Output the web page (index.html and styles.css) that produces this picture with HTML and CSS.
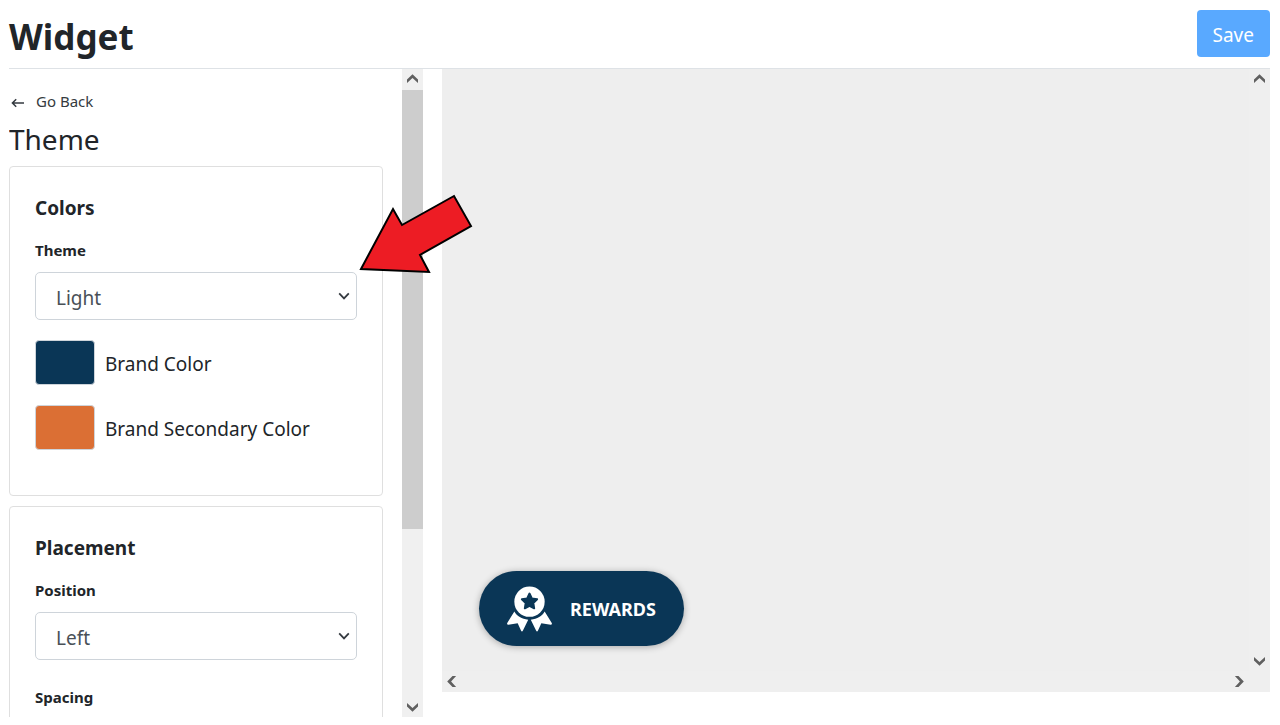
FILE: index.html
```html
<!DOCTYPE html>
<html lang="en">
<head>
<meta charset="utf-8">
<meta name="viewport" content="width=device-width, initial-scale=1">
<title>Widget</title>
<link rel="stylesheet" href="styles.css">
</head>
<body>
<div class="page">
  <header class="header">
    <h1 class="title">Widget</h1>
    <button class="save" type="button">Save</button>
  </header>
  <main class="main">
    <section class="sidebar">
      <div class="settings">
        <a class="back" href="#">
          <svg class="back-icon" viewBox="0 0 14 10" aria-hidden="true"><path d="M13 5H1.5M5.2 1.2 1.4 5l3.8 3.8"/></svg>
          Go Back
        </a>
        <h2 class="subtitle">Theme</h2>
        <div class="card">
          <h3 class="card-title">Colors</h3>
          <label class="label" for="theme">Theme</label>
          <div class="select-wrap">
            <select class="select" id="theme"><option>Light</option><option>Dark</option></select>
            <svg class="chevron" viewBox="0 0 12 8" aria-hidden="true"><path d="M1.2 1.4 6 6.4l4.8-5"/></svg>
          </div>
          <div class="color-row">
            <button class="swatch swatch-primary" id="brand" type="button" aria-labelledby="brand-label"></button>
            <label class="color-label" id="brand-label" for="brand">Brand Color</label>
          </div>
          <div class="color-row">
            <button class="swatch swatch-secondary" id="brand2" type="button" aria-labelledby="brand2-label"></button>
            <label class="color-label" id="brand2-label" for="brand2">Brand Secondary Color</label>
          </div>
        </div>
        <div class="card">
          <h3 class="card-title">Placement</h3>
          <label class="label" for="position">Position</label>
          <div class="select-wrap">
            <select class="select" id="position"><option>Left</option><option>Right</option></select>
            <svg class="chevron" viewBox="0 0 12 8" aria-hidden="true"><path d="M1.2 1.4 6 6.4l4.8-5"/></svg>
          </div>
          <p class="label label-spaced">Spacing</p>
        </div>
      </div>
      <div class="scrollbar">
        <svg class="arrow" viewBox="0 0 21 21" aria-hidden="true"><path d="M5 10.5v3.6l5.5-5 5.5 5v-3.6l-5.5-5.3z"/></svg>
        <div class="track"><div class="thumb"></div></div>
        <svg class="arrow" viewBox="0 0 21 21" aria-hidden="true"><path d="M5 10.500V6.900l5.500 5 5.500-5v3.600l-5.500 5.300z"/></svg>
      </div>
    </section>
    <section class="preview">
      <div class="canvas">
        <button class="rewards" type="button">
          <svg class="badge" viewBox="0 0 46 46" aria-hidden="true">
            <path d="M23 0a15.500 15.500 0 1 1 0 31a15.500 15.500 0 0 1 0-31z"/>
            <path class="badge-star" d="M23 7.200l2.400 5 5.400.8-3.900 3.900.9 5.400-4.800-2.500-4.800 2.500.9-5.400-3.900-3.900 5.400-.8z"/>
            <path d="M7.500 25.500c2.800 4.800 7.400 7.700 14.200 8.400l-5.400 11q-1 2-2 0l-3.400-7.300-9.500 1.400q-2 0-1-2zM38.500 25.500c-2.800 4.800-7.400 7.700-14.200 8.400l5.400 11q1 2 2 0l3.400-7.300 9.500 1.400q2 0 1-2z"/>
          </svg>
          <span>REWARDS</span>
        </button>
      </div>
      <div class="scrollbar scrollbar-idle">
        <svg class="arrow" viewBox="0 0 21 21" aria-hidden="true"><path d="M5 10.500v3.600l5.500-5 5.500 5v-3.600l-5.500-5.300z"/></svg>
        <svg class="arrow" viewBox="0 0 21 21" aria-hidden="true"><path d="M5 10.500V6.900l5.500 5 5.500-5v3.600l-5.500 5.300z"/></svg>
      </div>
      <div class="scrollbar scrollbar-x">
        <svg class="arrow" viewBox="0 0 21 21" aria-hidden="true"><path d="M10.500 5h3.600l-5 5.500 5 5.500h-3.600l-5.300-5.500z"/></svg>
        <svg class="arrow" viewBox="0 0 21 21" aria-hidden="true"><path d="M10.500 5H6.900l5 5.500-5 5.500h3.600l5.300-5.500z"/></svg>
      </div>
    </section>
  </main>
  <svg class="pointer" viewBox="0 0 114 80" aria-hidden="true"><path d="M2 75 34 15l9 16L95 2l17 30-51 29 9 17z"/></svg>
</div>
</body>
</html>
```
FILE: styles.css
```css
* {
  box-sizing: border-box;
}

body {
  margin: 0;
  background: #fff;
  color: #212529;
  font-family: "Segoe UI", "Noto Sans", sans-serif;
  font-size: 19px;
  line-height: 24px;
}

h1, h2, h3, p {
  margin: 0;
}

.page {
  position: relative;
  display: flex;
  flex-direction: column;
  height: 100vh;
  padding: 0 10px 8px 9px;
  overflow: hidden;
}

.header {
  display: flex;
  align-items: flex-start;
  justify-content: space-between;
  padding: 10px 0 11px;
  border-bottom: 1px solid #dee2e6;
}

.title {
  font-size: 35px;
  font-weight: 700;
  line-height: 47px;
  padding-top: 3px;
  height: 47px;
}

.save {
  padding: 12px 16px 8px;
  border: 0;
  border-radius: 4px;
  background: #59a9ff;
  color: #fff;
  font: inherit;
  line-height: 27px;
}

.main {
  flex: 1;
  display: flex;
  gap: 19px;
  min-height: 0;
}

.sidebar {
  display: flex;
  justify-content: space-between;
  flex: 0 0 414px;
  overflow: hidden;
}

.settings {
  flex: 1;
  margin-right: 19px;
  padding-top: 20px;
  overflow: hidden;
}

.back {
  display: flex;
  align-items: center;
  gap: 11px;
  padding-left: 2px;
  color: #343a40;
  font-size: 15px;
  text-decoration: none;
}

.back-icon {
  width: 14px;
  height: 10px;
  margin-top: 3px;
}

.back-icon,
.chevron {
  fill: none;
  stroke: #343a40;
  stroke-width: 1.5;
}

.subtitle {
  margin: 8px 0 9px;
  font-size: 28px;
  font-weight: 400;
  line-height: 36px;
}

.card {
  margin-bottom: 10px;
  padding: 29px 25px 45px;
  border: 1px solid #dfdfdf;
  border-radius: 4px;
}

.card-title {
  margin-bottom: 20px;
  font-size: 19px;
  font-weight: 700;
}

.label {
  display: block;
  margin-bottom: 12px;
  font-size: 15px;
  font-weight: 700;
  line-height: 20px;
}

.label-spaced {
  margin-top: 27px;
}

.select-wrap {
  position: relative;
}

.select {
  display: block;
  width: 100%;
  height: 48px;
  padding: 3px 20px 0;
  border: 1px solid #ced4da;
  border-radius: 5px;
  background: #fff;
  color: #495057;
  font: inherit;
  appearance: none;
}

.chevron {
  position: absolute;
  top: 20px;
  right: 7px;
  width: 12px;
  height: 8px;
  stroke-width: 1.8;
  pointer-events: none;
}

.color-row {
  display: flex;
  align-items: center;
  gap: 10px;
  margin-top: 20px;
}

.color-label {
  padding-top: 2px;
}

.swatch {
  width: 60px;
  height: 45px;
  padding: 0;
  border: 1px solid #ced4da;
  border-radius: 4px;
}

.swatch-primary {
  background: #0a3656;
}

.swatch-secondary {
  background: #db6f34;
}

.scrollbar {
  display: flex;
  flex-direction: column;
  justify-content: space-between;
  width: 21px;
  background: #f0f0f0;
}

.track {
  flex: 1;
}

.thumb {
  height: 72.5%;
  background: #cdcdcd;
}

.arrow {
  display: block;
  width: 21px;
  height: 21px;
  fill: #606060;
}

.preview {
  flex: 1;
  display: grid;
  grid-template-columns: 1fr 21px;
  grid-template-rows: 1fr 21px;
  margin-bottom: 25px;
  background: #efefef;
}

.canvas {
  display: flex;
  align-items: flex-end;
  padding: 0 37px 25px;
  background: #eee;
}

.scrollbar-idle {
  background: #efefef;
}

.scrollbar-x {
  flex-direction: row;
  width: auto;
  background: #efefef;
}

.rewards {
  display: flex;
  align-items: center;
  gap: 18px;
  height: 75px;
  padding: 0 28px;
  border: 0;
  border-radius: 38px;
  background: #0a3656;
  box-shadow: 0 1px 7px rgba(0, 0, 0, 0.3);
  color: #fff;
  font: inherit;
  font-size: 18px;
  font-weight: 700;
}

.badge {
  width: 45px;
  height: 46px;
  fill: #fff;
}

.badge-star {
  fill: #0a3656;
  stroke: #0a3656;
  stroke-width: 2;
  stroke-linejoin: round;
}

.pointer {
  position: absolute;
  top: 194px;
  left: 359px;
  width: 114px;
  height: 80px;
  fill: #ed1c24;
  stroke: #000;
  stroke-width: 2;
}
```
